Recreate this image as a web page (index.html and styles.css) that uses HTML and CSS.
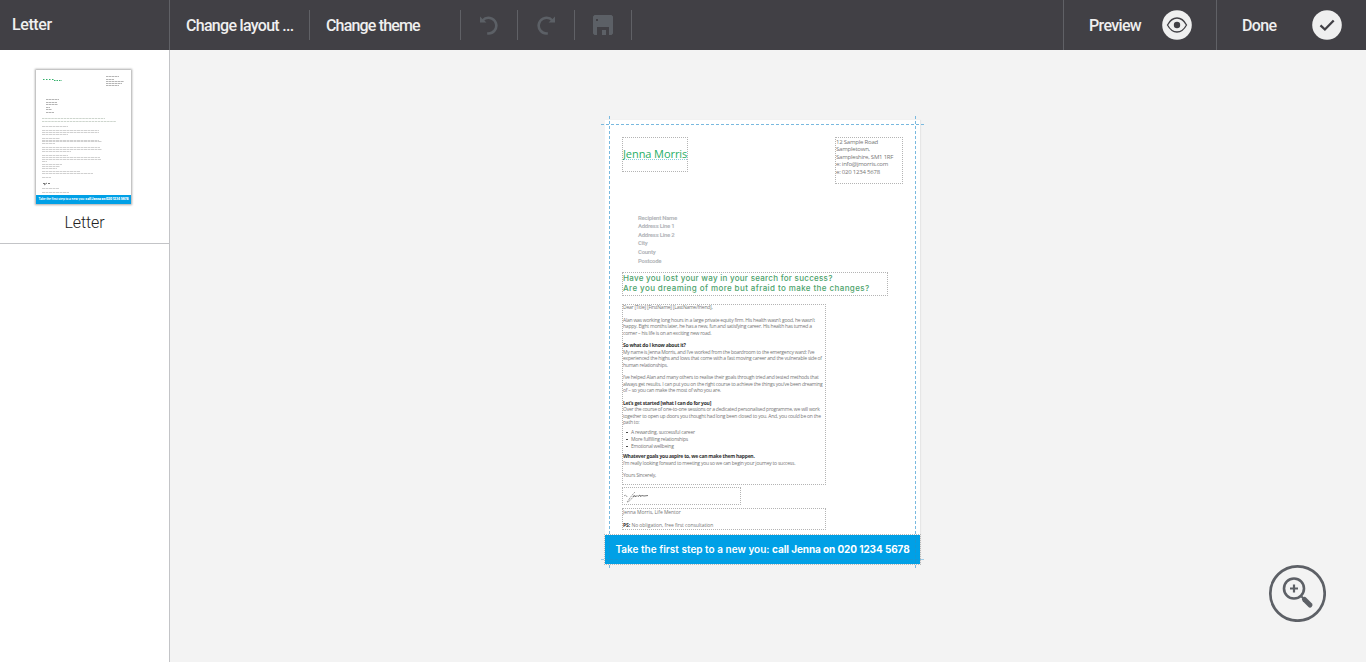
FILE: index.html
```html
<!DOCTYPE html>
<html lang="en">
<head>
<meta charset="utf-8">
<title>Letter</title>
<link rel="stylesheet" href="styles.css">
</head>
<body>
<div class="app">
  <header class="topbar">
    <div class="doc-name">Letter</div>
    <nav class="tools">
      <button class="tool layout">Change layout ...</button>
      <span class="sep"></span>
      <button class="tool theme">Change theme</button>
      <span class="sep"></span>
      <button class="icon-tool" aria-label="Undo"><svg width="20" height="20" viewBox="0 0 20 20"><path d="M3.600 5.500A7.800 7.800 0 1 1 8.200 18.300" fill="none" stroke="#5c6066" stroke-width="2.600"/><path d="M1 1.500L3.500 4L7.500 7.500H1Z" fill="#5c6066"/></svg></button>
      <span class="sep"></span>
      <button class="icon-tool" aria-label="Redo"><svg width="20" height="20" viewBox="0 0 20 20"><path d="M16.400 5.500A7.800 7.800 0 1 0 11.800 18.300" fill="none" stroke="#5c6066" stroke-width="2.600"/><path d="M19 1.500L16.500 4L12.500 7.500H19Z" fill="#5c6066"/></svg></button>
      <span class="sep"></span>
      <button class="icon-tool" aria-label="Save"><svg width="20" height="20" viewBox="0 0 20 20"><path fill="#5c6066" fill-rule="evenodd" d="M1.500 0H18.500L20 1.500V18.500L18.500 20H16V12H4V20H1.500L0 18.500V1.500ZM3 4V6H5V4Z"/><path fill="#5c6066" d="M9 15h4v5H9z"/></svg></button>
      <span class="sep"></span>
    </nav>
    <button class="action preview"><span>Preview</span>
      <svg width="30" height="30" viewBox="0 0 30 30"><circle cx="15" cy="15" r="14.800" fill="#efefef"/><path d="M5.500 15C8 10.300 11 8 15 8S22 10.300 24.500 15C22 19.700 19 22 15 22S8 19.700 5.500 15Z" fill="none" stroke="#414045" stroke-width="1.300"/><circle cx="15" cy="15" r="3.200" fill="#414045"/></svg>
    </button>
    <button class="action done"><span>Done</span>
      <svg width="30" height="30" viewBox="0 0 30 30"><circle cx="15" cy="15" r="14.800" fill="#efefef"/><path d="M8.500 15.300L12.900 19.500L21.700 10.500" fill="none" stroke="#414045" stroke-width="2.300"/></svg>
    </button>
  </header>

  <div class="workspace">
    <aside class="pages">
      <div class="page-card">
        <div class="thumb">
          <svg width="95" height="125" viewBox="0 0 95 125">
            <g stroke="#35b06c" stroke-width="1"><path d="M7 9.500H18" stroke-dasharray="1.500 1.500"/><path d="M18 10.500H26" stroke-dasharray="1.500 1"/></g>
            <g stroke="#b5b5b5" stroke-dasharray="2.500 .4">
              <path d="M70 6.500h13M70 9.500h8M70 11.500h18M70 13.500h16M70 15.500h13"/>
              <path d="M10 29.500h13M10 32.500h11M10 34.500h12M10 37.500h4M10 39.500h6M10 42.500h8"/>
            </g>
            <g stroke="#cdd5cd" stroke-dasharray="2.500 .6"><path d="M6 48.500h63M6 51.500h74"/></g>
            <g stroke="#d0d0d0" stroke-dasharray="3 .5">
              <path d="M6 56.500h26M6 60.500h57M6 62.500h57M6 64.500h26M6 68.500h18M6 70.500h57M6 71.500h60M6 73.500h13M6 77.500h58M6 79.500h60M6 81.500h29M6 85.500h26M6 87.500h58M6 89.500h59M6 91.500h5M6 94.500h20M6 96.500h18M6 98.500h15M6 101.500h38M6 103.500h51M6 107.500h9M6 118.500h17M6 122.500h27"/>
            </g>
            <path d="M7 113.500h2M8 115l3-2M12 113.500h2" stroke="#777"/>
          </svg>
          <div class="thumb-banner">Take the first step to a new you: <b>call Jenna on 020 1234 5678</b></div>
        </div>
        <div class="page-label">Letter</div>
      </div>
    </aside>

    <main class="canvas">
      <div class="sheet">
        <div class="box logo">Jenna Morris</div>
        <div class="box address">
          <div>12 Sample Road</div><div>Sampletown,</div><div>Sampleshire, SM1 1RF</div><div>e: info@jmorris.com</div><div>e: 020 1234 5678</div>
        </div>
        <div class="recipient"><div>Recipient Name</div><div>Address Line 1</div><div>Address Line 2</div><div>City</div><div>County</div><div>Postcode</div></div>
        <div class="box headline"><div class="first">Have you lost your way in your search for success?</div><div>Are you dreaming of more but afraid to make the changes?</div></div>
        <div class="box copy">
          <p>Dear [Title] [FirstName] [LastName/friend],</p>
          <p>Alan was working long hours in a large private equity firm. His health wasn’t good, he wasn’t<br>happy. Eight months later, he has a new, fun and satisfying career. His health has turned a<br>corner – his life is on an exciting new road.</p>
          <p><b>So what do I know about it?</b><br>My name is Jenna Morris, and I’ve worked from the boardroom to the emergency ward: I’ve<br>experienced the highs and lows that come with a fast moving career and the vulnerable side of<br>human relationships.</p>
          <p>I’ve helped Alan and many others to realise their goals through tried and tested methods that<br>always get results. I can put you on the right course to achieve the things you’ve been dreaming<br>of – so you can make the most of who you are.</p>
          <p class="last"><b>Let’s get started [what I can do for you]</b><br>Over the course of one-to-one sessions or a dedicated personalised programme, we will work<br>together to open up doors you thought had long been closed to you. And, you could be on the<br>path to:</p>
          <ul><li>A rewarding, successful career</li><li>More fulfilling relationships</li><li>Emotional wellbeing</li></ul>
          <p><b>Whatever goals you aspire to, we can make them happen.</b><br>I’m really looking forward to meeting you so we can begin your journey to success.</p>
          <p>Yours Sincerely,</p>
        </div>
        <div class="box signature"><svg width="30" height="17" viewBox="0 0 30 17" fill="none" stroke="#555"><path stroke-width=".6" stroke-dasharray="1.800 .8" d="M2 9Q4 7 5 10M13 5Q10 8 8 11T5 15Q8 15 12 8"/><path stroke-width=".8" d="M11 10L13 8.500L13.500 10L15 8.500L16 9.500L18 8L18.500 9.500L20 8.500L22 9L26 8.500"/></svg></div>
        <div class="box signoff"><p>Jenna Morris, Life Mentor</p><p><b>PS:</b> No obligation, free first consultation</p></div>
        <div class="banner"><span>Take the first step to a new you: <b>call Jenna on 020 1234 5678</b></span></div>
        <svg class="guides" width="326" height="454" viewBox="0 0 326 454"><g stroke="#79b9df" fill="none" stroke-dasharray="3 2"><path d="M0 8.500H325M8.500 0V419M8.500 449V454M314.500 0V419M314.500 449V454"/><path d="M0 443.500H4M320 443.500H325" opacity=".7"/></g><path d="M4 443.500H320M8.500 419V448M314.500 419V448" stroke="#2a8fc4" stroke-dasharray="3 2" opacity=".5"/></svg>
      </div>
      <button class="zoom" aria-label="Zoom in"><svg width="58" height="58" viewBox="0 0 58 58"><circle cx="29.500" cy="29.500" r="27.200" fill="none" stroke="#5d6066" stroke-width="2.700"/><circle cx="26" cy="24.500" r="10" fill="none" stroke="#5d6066" stroke-width="2.600"/><path d="M22 24.500h8M26 20.500v8" stroke="#5d6066" stroke-width="2.200"/><path d="M33.500 32.500l2.500 2.500" stroke="#5d6066" stroke-width="2"/><path d="M36.500 35.500l5.500 5.500" stroke="#5d6066" stroke-width="5" stroke-linecap="round"/></svg></button>
    </main>
  </div>
</div>
</body>
</html>
```

FILE: styles.css
```css
* { box-sizing: border-box; }
body { margin: 0; font-family: Roboto, "Liberation Sans", sans-serif; background: #f3f3f3; }
button { border: 0; padding: 0; margin: 0; background: none; font: inherit; color: inherit; }
svg { display: block; }
p, ul { margin: 0; padding: 0; }
.app { width: 1366px; height: 662px; display: flex; flex-direction: column; overflow: hidden; }
.topbar { height: 50px; flex: none; display: flex; background: #414045; color: #efefef; font-size: 16px; font-weight: 500; }
.doc-name { width: 170px; border-right: 1px solid #606166; padding-left: 12px; line-height: 50px; letter-spacing: -.4px; }
.tools { flex: 1; display: flex; align-items: center; }
.tool { text-align: left; white-space: nowrap; padding: 2px 0 0 16px; line-height: 48px; letter-spacing: -.7px; }
.layout { width: 139px; }
.theme { width: 150px; letter-spacing: -.83px; }
.sep { width: 1px; height: 30px; background: #606166; }
.icon-tool { width: 56px; display: flex; justify-content: center; }
.action { display: flex; align-items: center; justify-content: space-between; border-left: 1px solid #606166; padding: 0 24.500px 1px 25px; letter-spacing: -.65px; }
.action span { padding-top: 2px; }
.preview { width: 153px; }
.done { width: 150px; }
.workspace { flex: 1; display: flex; min-height: 0; }
.pages { width: 170px; background: #fff; border-right: 1px solid #c3c4c7; }
.page-card { height: 194px; border-bottom: 1px solid #c3c4c7; padding: 20px 0 0 36px; }
.thumb { width: 95px; height: 134px; background: #fff; box-shadow: 0 0 2px 1px #aaa; }
.thumb-banner { height: 9px; background: #00a0e6; color: #fff; font: 700 3px/9px Inter, sans-serif; text-align: center; white-space: nowrap; overflow: hidden; }
.page-label { width: 97px; text-align: center; font-size: 16px; font-weight: 300; line-height: 20px; margin-top: 9px; letter-spacing: -.1px; color: #222; }
.canvas { flex: 1; position: relative; background: #f3f3f3; }

.sheet { position: absolute; left: 435px; top: 70px; width: 315px; height: 444px; background: #fff; box-shadow: 1px 0 1px #e6e6e6; color: #777; font-family: "Open Sans", sans-serif; white-space: nowrap; }
.box { position: absolute; outline: 1px dotted #b4b4b4; outline-offset: -1px; }
.guides { position: absolute; left: -4px; top: -4px; }
.logo { left: 17px; top: 17px; width: 66px; height: 35px; padding-left: 1px; font: 11px/33px "Open Sans", sans-serif; letter-spacing: -.08px; color: #1fae66; }
.logo::after { content: ""; position: absolute; left: 2px; right: 1px; top: 22px; border-top: 1px dotted #8fd0d8; }
.address { left: 230px; top: 17px; width: 68px; height: 47px; padding: 2px 1px; font-size: 6px; line-height: 7.400px; letter-spacing: -.22px; }
.recipient { position: absolute; left: 33px; top: 93.700px; font: bold 6px/8.600px Roboto, sans-serif; letter-spacing: -.27px; color: #b4b7bb; }
.headline { left: 17px; top: 152px; width: 266px; height: 24px; padding: 1px; font: 500 8px/10px Inter, sans-serif; letter-spacing: .4px; color: #4da36c; }
.headline .first { letter-spacing: .27px; }
.copy { left: 17px; top: 184px; width: 204px; height: 181px; padding-left: 1px; font-size: 5px; line-height: 6.400px; letter-spacing: -.23px; }
.copy p { margin-bottom: 6.400px; }
.copy b, .signoff b { color: #333; }
.copy .last { margin-bottom: 3.200px; }
.copy ul { list-style: none; line-height: 7px; margin-bottom: 3.300px; }
.copy li { padding-left: 8px; position: relative; }
.copy li::before { content: ""; position: absolute; left: 3px; top: 3px; width: 1.500px; height: 1.500px; border-radius: 50%; background: #333; }
.signature { left: 17px; top: 367px; width: 119px; height: 18px; }
.signoff { left: 17px; top: 388px; width: 204px; height: 22px; padding: 1px; font-size: 5px; line-height: 6.400px; letter-spacing: -.05px; }
.signoff p + p { margin-top: 6.400px; }
.banner { position: absolute; left: 0; top: 415px; width: 315px; height: 29px; background: #00a0e6; color: #fff; font: 600 10px/29px Inter, sans-serif; letter-spacing: .02px; text-align: center; outline: 1px dotted #b9b9b9; }
.banner b { letter-spacing: -.1px; font-weight: 700; }
.zoom { position: absolute; left: 1098px; top: 514px; }
```
